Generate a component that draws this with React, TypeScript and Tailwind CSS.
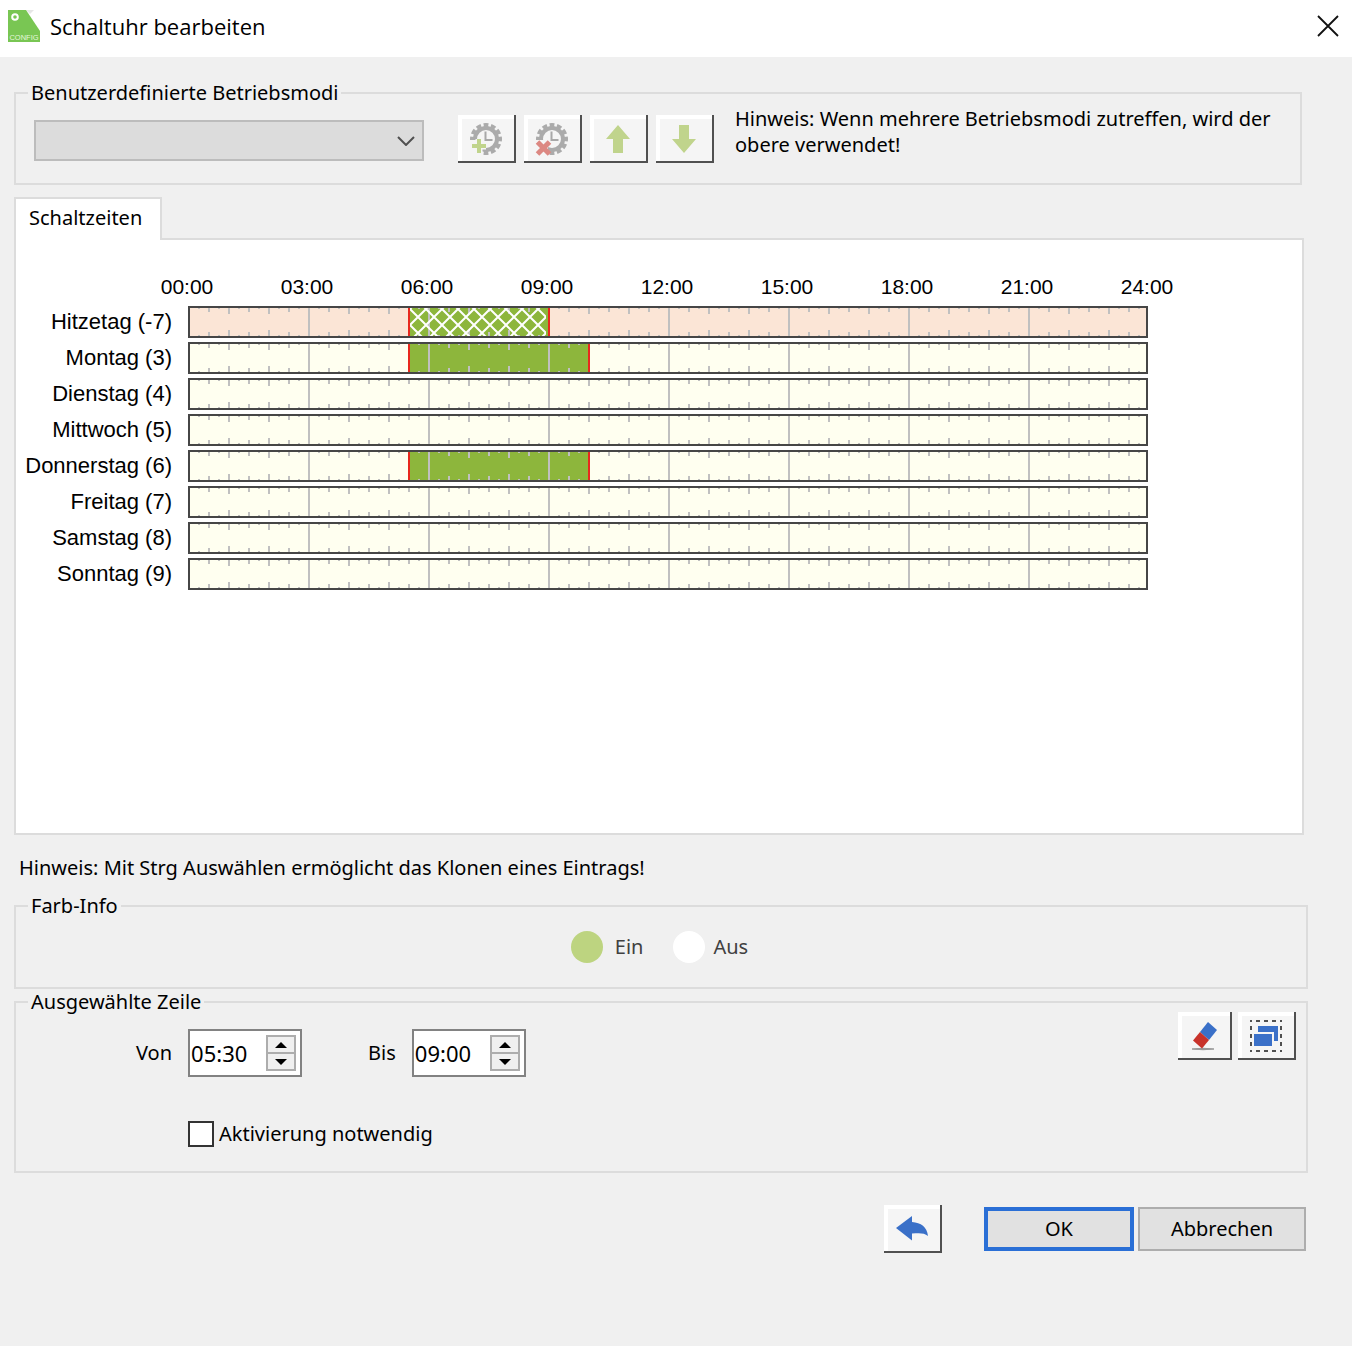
import type { ReactNode } from "react";

type Slot = { from: number; to: number; hatched?: boolean };
type Day = { label: string; heat?: boolean; slots: Slot[] };

const days: Day[] = [
  { label: "Hitzetag (-7)", heat: true, slots: [{ from: 5.5, to: 9, hatched: true }] },
  { label: "Montag (3)", slots: [{ from: 5.5, to: 10 }] },
  { label: "Dienstag (4)", slots: [] },
  { label: "Mittwoch (5)", slots: [] },
  { label: "Donnerstag (6)", slots: [{ from: 5.5, to: 10 }] },
  { label: "Freitag (7)", slots: [] },
  { label: "Samstag (8)", slots: [] },
  { label: "Sonntag (9)", slots: [] },
];

const times = ["00:00", "03:00", "06:00", "09:00", "12:00", "15:00", "18:00", "21:00", "24:00"];

function tickPath() {
  let d = "";
  for (let q = 1; q < 96; q++) {
    const x = q * 10 + 1;
    if (q % 12 === 0) {
      d += `M${x} 2V30`;
    } else {
      const len = q % 4 === 0 ? 6 : q % 2 === 0 ? 4 : 1;
      d += `M${x} 2v${len}M${x} 30v-${len}`;
    }
  }
  return d;
}

const ticks = tickPath();

function DayBar({ day }: { day: Day }) {
  return (
    <svg
      viewBox="0 0 960 32"
      preserveAspectRatio="none"
      className="block h-8 w-full"
      role="img"
      aria-label={day.label}
    >
      <defs>
        <pattern id="hatch" width="16" height="16" patternUnits="userSpaceOnUse" x="14" y="3">
          <path d="M-1 -1L17 17M17 -1L-1 17M-1 1L1 -1M15 17L17 15M-1 15L1 17M15 -1L17 1" stroke="#fff" strokeWidth="2" />
        </pattern>
      </defs>
      <rect width="960" height="32" fill={day.heat ? "#fbe5d6" : "#fffff0"} />
      {day.slots.map((s) => (
        <rect key={s.from} x={s.from * 40} y="1" width={(s.to - s.from) * 40} height="30" fill="#8db63c" />
      ))}
      <path d={ticks} stroke="#c0c0c0" strokeWidth="2" fill="none" />
      {day.slots.map((s) => (
        <g key={s.from}>
          {s.hatched && (
            <rect x={s.from * 40 + 2} y="2" width={(s.to - s.from) * 40 - 4} height="28" fill="url(#hatch)" />
          )}
          <path d={`M${s.from * 40 + 1} 1V31M${s.to * 40 + 1} 1V31`} stroke="#e8281e" strokeWidth="2" />
        </g>
      ))}
      <rect x="1" y="1" width="958" height="30" fill="none" stroke="#464646" strokeWidth="2" />
    </svg>
  );
}

function ToolButton({ label, narrow, children }: { label: string; narrow?: boolean; children: ReactNode }) {
  return (
    <button
      type="button"
      aria-label={label}
      className={
        (narrow ? "w-[54px]" : "w-[58px]") +
        " flex h-12 shrink-0 items-center justify-center border-r-2 border-b-2 border-[#505050] bg-[#f5f5f5] pt-[2px] shadow-[inset_4px_4px_0_#ffffff]"
      }
    >
      {children}
    </button>
  );
}

function GearClock({ children }: { children: ReactNode }) {
  return (
    <svg viewBox="0 0 34 34" className="h-[34px] w-[34px]" fill="none">
      <circle cx="17" cy="17" r="11" stroke="#ababab" strokeWidth="4" />
      <circle
        cx="17"
        cy="17"
        r="14"
        stroke="#ababab"
        strokeWidth="4"
        pathLength="120"
        strokeDasharray="6.500 3.500"
        strokeDashoffset="3.250"
      />
      <path d="M16.500 9.500V18H23.500" stroke="#a8a8a8" strokeWidth="2" />
      {children}
    </svg>
  );
}

function Group({ title, className, children }: { title: string; className: string; children: ReactNode }) {
  return (
    <fieldset className={"min-w-0 border-2 border-[#dcdcdc] " + className}>
      <legend className="ml-3 px-[3px]">{title}</legend>
      {children}
    </fieldset>
  );
}

function TimeField({ id, label, value }: { id: string; label: string; value: string }) {
  return (
    <div className="flex items-center gap-4">
      <label htmlFor={id}>{label}</label>
      <div className="flex h-12 w-[114px] items-center justify-between border-2 border-[#828282] bg-white pr-1">
        <input
          id={id}
          type="text"
          defaultValue={value}
          className="w-[70px] bg-transparent pl-[1px] text-[22px] outline-none"
        />
        <div className="flex h-9 w-[30px] flex-col border border-[#adadad] bg-[#adadad]">
          <button
            type="button"
            aria-label={label + " erhöhen"}
            className="flex flex-1 items-center justify-center border border-[#adadad] bg-[#f0f0f0]"
          >
            <svg viewBox="0 0 12 6" className="h-[6px] w-3">
              <path d="M6 0L12 6H0Z" />
            </svg>
          </button>
          <button
            type="button"
            aria-label={label + " verringern"}
            className="flex flex-1 items-center justify-center border border-[#adadad] bg-[#f0f0f0]"
          >
            <svg viewBox="0 0 12 6" className="h-[6px] w-3">
              <path d="M6 6L12 0H0Z" />
            </svg>
          </button>
        </div>
      </div>
    </div>
  );
}

export default function App() {
  return (
    <div className="min-h-screen bg-[#f0f0f0] font-['Noto_Sans','Open_Sans',sans-serif] text-[20px] leading-[26px] text-black">
      <header className="flex h-[57px] items-center bg-white pr-3 pb-[5px] pl-2">
        <svg viewBox="0 0 32 32" className="h-8 w-8">
          <path d="M18 0H26L22 4Z" fill="#e6e6e6" />
          <path d="M0 0H18L32 21V32H0Z" fill="#79c653" />
          <circle cx="7" cy="7" r="2.800" fill="none" stroke="#fff" strokeWidth="2" />
          <text x="16" y="29.500" textAnchor="middle" fontFamily="Liberation Sans, sans-serif" fontSize="7.500" fill="#e4f6da">
            CONFIG
          </text>
        </svg>
        <h1 className="ml-[10px] font-['Open_Sans','Noto_Sans',sans-serif] text-[22px]">Schaltuhr bearbeiten</h1>
        <button type="button" aria-label="Schließen" className="ml-auto">
          <svg viewBox="0 0 24 24" className="h-6 w-6" stroke="#111" strokeWidth="1.800">
            <path d="M2 2L22 22M22 2L2 22" />
          </svg>
        </button>
      </header>

      <main className="pt-[23px] pr-11 pb-[94px] pl-[14px]">
        <Group title="Benutzerdefinierte Betriebsmodi" className="mr-[6px] pb-[20px]">
          <div className="flex items-start pl-[18px]">
            <div className="relative mt-[14px] w-[390px]">
              <select
                aria-label="Betriebsmodus"
                className="block h-[41px] w-full appearance-none border-2 border-[#bcbcbc] bg-[#dcdcdc]"
              />
              <svg
                viewBox="0 0 18 10"
                className="pointer-events-none absolute top-4 right-[9px] h-[10px] w-[18px]"
                fill="none"
                stroke="#505050"
                strokeWidth="2"
              >
                <path d="M1 1L9 9L17 1" />
              </svg>
            </div>
            <div className="mt-[9px] ml-[34px] flex gap-2">
              <ToolButton label="Betriebsmodus hinzufügen">
                <GearClock>
                  <path d="M0 18H13V34H0Z" fill="#f5f5f5" />
                  <path d="M3 24H17M10 17V31" stroke="#f5f5f5" strokeWidth="7" />
                  <path d="M3 24H17M10 17V31" stroke="#c0d48c" strokeWidth="4" />
                </GearClock>
              </ToolButton>
              <ToolButton label="Betriebsmodus löschen">
                <GearClock>
                  <path d="M0 18H13V34H0Z" fill="#f5f5f5" />
                  <path d="M2.500 20L14.500 32M14.500 20L2.500 32" stroke="#dc8882" strokeWidth="5" />
                </GearClock>
              </ToolButton>
              <ToolButton label="Nach oben">
                <svg viewBox="0 0 26 30" className="h-[30px] w-[26px]">
                  <path d="M13 1L25 15H18V29H8V15H1Z" fill="#c0d48c" />
                </svg>
              </ToolButton>
              <ToolButton label="Nach unten">
                <svg viewBox="0 0 26 30" className="h-[30px] w-[26px]">
                  <path d="M13 29L25 15H18V1H8V15H1Z" fill="#c0d48c" />
                </svg>
              </ToolButton>
            </div>
            <p className="ml-[21px] flex-1">
              Hinweis: Wenn mehrere Betriebsmodi zutreffen, wird der obere verwendet!
            </p>
          </div>
        </Group>

        <div className="mt-3 mr-1">
          <div role="tablist" className="flex">
            <button
              type="button"
              role="tab"
              aria-selected="true"
              className="relative -mb-[2px] h-[43px] border-2 border-b-0 border-[#dcdcdc] bg-white pr-[18px] pb-1 pl-[13px]"
            >
              Schaltzeiten
            </button>
          </div>
          <section className="border-2 border-[#dcdcdc] bg-white pt-[34px] pr-[154px] pb-[243px] font-['Liberation_Sans',Arial,sans-serif] text-[22px]">
            <div className="mr-[1px] ml-[171px] flex justify-between pb-[6px] text-[21px]">
              {times.map((t) => (
                <span key={t} className="flex w-0 justify-center whitespace-nowrap">
                  {t}
                </span>
              ))}
            </div>
            <div className="grid grid-cols-[156px_1fr] items-center gap-x-4 gap-y-1">
              {days.map((d) => (
                <div key={d.label} className="contents">
                  <span className="text-right whitespace-nowrap">{d.label}</span>
                  <DayBar day={d} />
                </div>
              ))}
            </div>
          </section>
        </div>

        <p className="mt-5 ml-[5px]">Hinweis: Mit Strg Auswählen ermöglicht das Klonen eines Eintrags!</p>

        <Group title="Farb-Info" className="mt-3 pb-6">
          <div className="mt-3 flex items-center justify-center gap-[30px] pr-[3px] text-[#404040]">
            <span className="flex items-center gap-3">
              <span className="h-8 w-8 rounded-full bg-[#bdd480]" />
              Ein
            </span>
            <span className="flex items-center gap-2">
              <span className="h-8 w-8 rounded-full bg-white" />
              Aus
            </span>
          </div>
        </Group>

        <Group title="Ausgewählte Zeile" className="pb-6">
          <div className="flex items-start pr-[10px]">
            <div className="mt-[14px] ml-[120px] flex gap-[66px]">
              <TimeField id="von" label="Von" value="05:30" />
              <TimeField id="bis" label="Bis" value="09:00" />
            </div>
            <div className="-mt-[3px] ml-auto flex gap-[6px]">
              <ToolButton label="Eintrag löschen" narrow>
                <svg viewBox="0 0 28 30" className="h-[30px] w-7">
                  <path d="M2 28Q13 26.500 24 28Q13 29.500 2 28Z" fill="#777" stroke="#999" />
                  <path d="M18 1L27 9L19 19L10 11Z" fill="#3a70c8" />
                  <path d="M10 11L19 19L12 27.500L3 19.500Z" fill="#c8322a" />
                </svg>
              </ToolButton>
              <ToolButton label="Alle auswählen">
                <svg viewBox="0 0 34 34" className="h-[34px] w-[34px]">
                  <path
                    d="M1 2H33M1 32H33M2 1V33M32 1V33"
                    fill="none"
                    stroke="#505050"
                    strokeWidth="2"
                    strokeDasharray="2 4 4 4 4 4 4 4 2 4"
                  />
                  <path d="M9 7H29V22H25V13H9Z" fill="#3a70c8" />
                  <rect x="5" y="15" width="18" height="12" fill="#3a70c8" />
                </svg>
              </ToolButton>
            </div>
          </div>
          <label className="mt-11 ml-[172px] flex w-fit items-center gap-[5px]">
            <input type="checkbox" className="h-[26px] w-[26px] appearance-none border-2 border-[#333] bg-white" />
            Aktivierung notwendig
          </label>
        </Group>

        <div className="mt-8 mr-[2px] flex items-center justify-end">
          <ToolButton label="Zurücksetzen">
            <svg viewBox="0 0 34 26" className="h-[26px] w-[34px]">
              <path d="M1 12L17 0V6C26 6.500 32 11 33 20C29 16.500 24 17 17 17.500V24.500Z" fill="#3a70c8" />
            </svg>
          </ToolButton>
          <button type="button" className="ml-[42px] h-11 w-[150px] border-4 border-[#2a6fd6] bg-[#e1e1e1]">
            OK
          </button>
          <button type="button" className="ml-1 h-11 w-[168px] border-2 border-[#adadad] bg-[#e1e1e1]">
            Abbrechen
          </button>
        </div>
      </main>
    </div>
  );
}
